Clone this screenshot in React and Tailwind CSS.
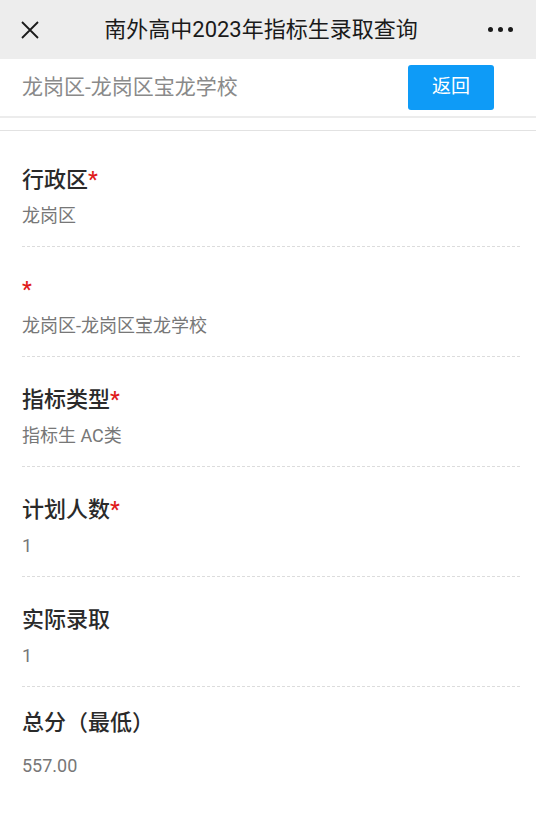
import React from "react";

const fields = [
  { label: "行政区", star: true, value: "龙岗区" },
  { label: "", star: true, value: "龙岗区-龙岗区宝龙学校" },
  { label: "指标类型", star: true, value: "指标生 AC类" },
  { label: "计划人数", star: true, value: "1" },
  { label: "实际录取", star: false, value: "1" },
  { label: "总分（最低）", star: false, value: "557.00", last: true },
];

export default function App() {
  return (
    <div
      className="w-[536px] h-[827px] bg-white overflow-hidden"
      style={{ fontFamily: 'Roboto, "Noto Sans CJK SC", sans-serif' }}
    >
      <div className="h-[59px] bg-[#ededed] flex items-center justify-between pl-[20px] pr-[20px]">
        <svg width="20" height="20" viewBox="0 0 20 20" className="text-[#1a1a1a]">
          <path d="M2 2 L18 18 M18 2 L2 18" stroke="currentColor" strokeWidth="1.8" fill="none" />
        </svg>
        <div className="text-[22px] text-[#1a1a1a] leading-none mr-[6px]">南外高中2023年指标生录取查询</div>
        <div className="flex items-center gap-[5px] w-[26px] mr-[2px]">
          <span className="w-[5px] h-[5px] rounded-full bg-[#1a1a1a]" />
          <span className="w-[5px] h-[5px] rounded-full bg-[#1a1a1a]" />
          <span className="w-[5px] h-[5px] rounded-full bg-[#1a1a1a]" />
        </div>
      </div>
      <div className="h-[59px] flex items-center justify-between pl-[22px] pr-[42px] border-b-2 border-[#ececec]">
        <div className="text-[21px] text-[#8a8a8a]">龙岗区-龙岗区宝龙学校</div>
        <button className="w-[86px] h-[45px] bg-[#0e9bf7] rounded-[3px] text-white text-[19px] flex items-center justify-center">
          返回
        </button>
      </div>
      <div className="h-[12px]" />
      <div className="border-t border-[#e2e2e2] pt-[6px]">
        {fields.map((f, i) => (
          <div key={i} className="pl-[22px] pr-[16px]">
            <div
              className={
                f.last
                  ? "pt-[21px] pb-[18px]"
                  : "pt-[28px] pb-[18px] border-b border-dashed border-[#dcdcdc]"
              }
            >
              <div className="h-[30px] leading-[30px] text-[22px] font-medium text-[#2a2a2a]">
                {f.label}
                {f.star && <span className="text-[#e01b1b]">*</span>}
              </div>
              <div
                className={
                  (f.last ? "mt-[16px] " : "mt-[9px] ") +
                  "h-[24px] leading-[24px] text-[18px] text-[#777]"
                }
              >
                {f.value}
              </div>
            </div>
          </div>
        ))}
      </div>
    </div>
  );
}
